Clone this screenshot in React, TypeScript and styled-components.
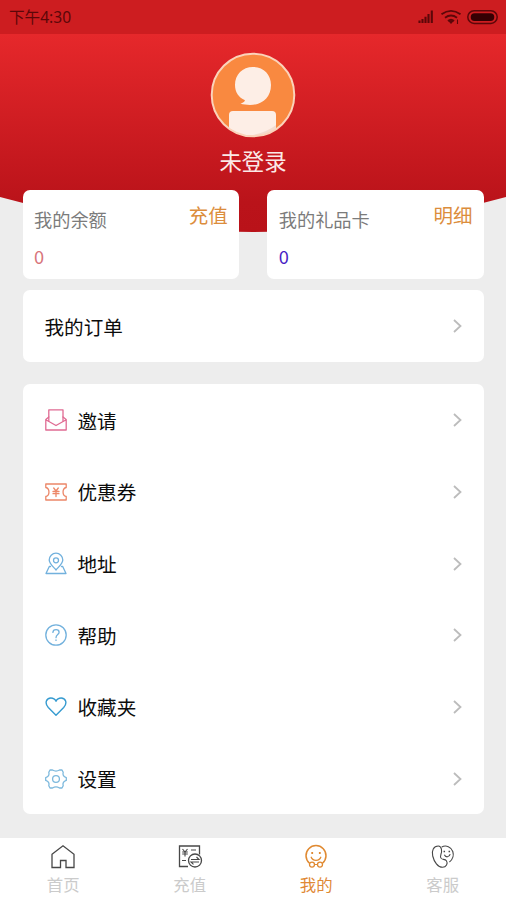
import React from "react";
import styled, { createGlobalStyle } from "styled-components";

const GlobalStyle = createGlobalStyle`
  *, *::before, *::after { box-sizing: border-box; }
  body {
    margin: 0;
    background: #ededed;
    font-family: "Noto Sans CJK SC", "Noto Sans", sans-serif;
  }
`;

const Screen = styled.div`
  width: 506px;
  height: 900px;
  display: flex;
  flex-direction: column;
  background: #ededed;
  overflow: hidden;
`;

const StatusBar = styled.header`
  flex: none;
  height: 34px;
  padding: 0 7px 0 9px;
  display: flex;
  align-items: center;
  justify-content: space-between;
  background: #cd1d20;
  color: #5c0709;
`;

const Clock = styled.span`
  font-family: "Noto Sans", "Noto Sans CJK SC", sans-serif;
  font-size: 15.6px;
  line-height: 34px;
`;

const StatusIcons = styled.svg`
  display: block;
  width: 82px;
  height: 20px;
`;

const Hero = styled.section`
  flex: none;
  height: 198px;
  padding-top: 18px;
  display: flex;
  flex-direction: column;
  align-items: center;
  background: linear-gradient(#e6282b 0%, #ba131a 85%, #b91219 100%);
  clip-path: path("M0 0H506V163Q253 233 0 163Z");
`;

const Avatar = styled.svg`
  display: block;
  width: 86px;
  height: 86px;
`;

const UserName = styled.div`
  margin-top: 7px;
  font-size: 22.4px;
  line-height: 30px;
  color: #fbe9e7;
`;

const Content = styled.main`
  flex: 1;
  margin-top: -42px;
  padding: 0 22px 0 22.5px;
  position: relative;
`;

const Balances = styled.div`
  display: grid;
  grid-template-columns: 1fr 1fr;
  gap: 28px;
`;

const Card = styled.section`
  background: #fff;
  border-radius: 7px;
`;

const BalanceCard = styled(Card)`
  height: 89px;
  padding: 10px 11.5px 0;
`;

const BalanceHead = styled.div`
  display: flex;
  justify-content: space-between;
  align-items: flex-start;
`;

const BalanceLabel = styled.span`
  padding-top: 5px;
  font-size: 18.2px;
  line-height: 28px;
  color: #7b7b7b;
`;

const BalanceAction = styled.span`
  font-size: 19.5px;
  line-height: 29px;
  color: #dc8d3c;
`;

const Amount = styled.div<{ $color: string }>`
  margin-top: 9px;
  font-size: 18.2px;
  line-height: 28px;
  color: ${(p) => p.$color};
`;

const OrderCard = styled(Card)`
  margin-top: 11.4px;
  height: 71.5px;
`;

const MenuCard = styled(Card)`
  margin-top: 22.5px;
  height: 430px;
`;

const Row = styled.div`
  height: 71.67px;
  padding: 0 21.5px 0 22px;
  display: flex;
  align-items: center;
`;

const RowIcon = styled.svg<{ $color: string }>`
  flex: none;
  width: 22px;
  height: 24px;
  margin-right: 11px;
  fill: none;
  stroke: ${(p) => p.$color};
  stroke-width: 1.3;
  stroke-linejoin: round;
  stroke-linecap: round;
`;

const RowLabel = styled.span`
  flex: 1;
  padding-top: 1px;
  font-size: 19.6px;
  line-height: 30px;
  color: #0c0c0c;
`;

const ChevronIcon = styled.svg`
  width: 10px;
  height: 14px;
  fill: none;
  stroke: #bcbcbc;
  stroke-width: 1.8;
`;

const TabBar = styled.nav`
  flex: none;
  height: 62px;
  padding-top: 6px;
  display: grid;
  grid-template-columns: repeat(4, 1fr);
  background: #fff;
`;

const Tab = styled.div`
  display: flex;
  flex-direction: column;
  align-items: center;
`;

const TabIcon = styled.svg<{ $active: boolean }>`
  width: 26px;
  height: 26px;
  fill: none;
  stroke: ${(p) => (p.$active ? "#e08a32" : "#484848")};
  stroke-width: 1.3;
`;

const TabLabel = styled.span<{ $active: boolean }>`
  margin-top: 2px;
  font-size: 16.4px;
  line-height: 24px;
  color: ${(p) => (p.$active ? "#df8935" : "#cbcbcb")};
`;

const Chevron = () => (
  <ChevronIcon viewBox="0 0 10 14">
    <path d="M1 1 7.5 7 1 13" />
  </ChevronIcon>
);

const menu = [
  {
    label: "邀请",
    color: "#e06b93",
    icon: (
      <>
        <path d="M3.8 13V1.8H18V13" />
        <path d="M3.8 9 .8 11.5V22H21.2V11.5L18 9M.8 11.8 11 17.5 21.2 11.8" />
      </>
    ),
  },
  {
    label: "优惠券",
    color: "#ec8768",
    icon: (
      <>
        <path d="M.8 4H21.2V7.5C17 8.3 17 15.7 21.2 16.5V20H.8V16.5C5 15.7 5 8.3.8 7.5Z" />
        <path d="M8.7 8 11 11 13.3 8M8 11.5H14M8 13.7H14M11 11V16.5" />
      </>
    ),
  },
  {
    label: "地址",
    color: "#72b1dd",
    icon: (
      <>
        <path d="M11 18C8 14.5 4.2 11.5 4.2 8a6.8 6.8 0 0 1 13.6 0C17.8 11.5 14 14.5 11 18Z" />
        <circle cx="11" cy="8.3" r="2.5" />
        <path d="M5.5 14.5H4.3L1 21.5H21L17.7 14.5H16.5" />
      </>
    ),
  },
  {
    label: "帮助",
    color: "#72b1dd",
    icon: (
      <>
        <circle cx="11" cy="12" r="10.2" />
        <path d="M7.9 9.4C8 5.7 14.1 5.8 14.1 9.3 14.1 11.6 11 11.7 11 14.7M11 17V17.4" />
      </>
    ),
  },
  {
    label: "收藏夹",
    color: "#369bd0",
    icon: (
      <path
        strokeWidth="1.4"
        d="M11 20.2 3.3 12.4C-.8 8 1.5 3 5.8 3 8.5 3 10.2 4.5 11 6.3 11.8 4.5 13.5 3 16.2 3 20.5 3 22.8 8 18.7 12.4Z"
      />
    ),
  },
  {
    label: "设置",
    color: "#7db9dd",
    icon: (
      <>
        <path d="M5 3H7.5Q11 5.1 14.5 3H17L18.2 5.3C17.4 8 18.6 9.8 21.3 10.6V13.4C18.6 14.2 17.4 16 18.2 18.7L17 21H14.5Q11 18.9 7.5 21H5L3.8 18.7C4.6 16 3.4 14.2.7 13.4V10.6C3.4 9.8 4.6 8 3.8 5.3Z" />
        <circle cx="11" cy="12" r="3.4" />
      </>
    ),
  },
];

const tabs = [
  { label: "首页", active: false, icon: <path d="M2 10.2 13 1.7 24 10.2V23.5H16V16.5H10.5V23.5H2Z" /> },
  {
    label: "充值",
    active: false,
    icon: (
      <>
        <path d="M11 22.5H2.5V2H22.5V10.5" />
        <path strokeWidth="1.1" d="M5.5 5 8 8 10.5 5M5.2 8H10.8M5.2 10H10.8M8 8V12.5M14 6H19M5 16.5H9" />
        <circle cx="18" cy="16.5" r="6.5" />
        <path strokeWidth="1.1" d="M14 15.5H22L19.5 13M22 18H14L16.5 20.3" />
      </>
    ),
  },
  {
    label: "我的",
    active: true,
    icon: (
      <>
        <path strokeWidth="1.5" d="M6.5 19.2A10 10 0 1 1 19.5 19.2" />
        <path strokeWidth="1.2" d="M8 12.8C9.5 17.5 16.5 17.5 18 12.8M11.3 20.5H14.7" />
        <circle cx="9" cy="20.6" r="2.5" />
        <circle cx="17" cy="20.6" r="2.5" />
        <path strokeWidth="1.8" d="M9.2 8V10M16.8 8V10" />
      </>
    ),
  },
  {
    label: "客服",
    active: false,
    icon: (
      <>
        <path
          strokeWidth="1.1"
          d="M8.3 2C3.6 2 1.4 6.5 2.7 12 4 17.7 8 23.3 12.5 23.3 16.2 23.3 18.3 19.5 16.4 16.7 15.2 15 12.4 15.7 11.3 14.5 10.2 13.2 10.4 11.6 11 10 12 7.5 12 2 8.3 2Z"
        />
        <path strokeWidth="1.1" d="M11.7 3C16 .6 21.4 3 22.8 7.5 24 11.5 22.6 15.5 19.4 18M14.4 10.8C15.6 13.8 19.3 13.4 20.2 10.2" />
        <path strokeWidth="1.5" d="M14.3 6.8V8.3M19.3 6.8V8.3" />
      </>
    ),
  },
];

export default function App() {
  return (
    <>
      <GlobalStyle />
      <Screen>
        <StatusBar>
          <Clock>下午4:30</Clock>
          <StatusIcons viewBox="0 0 82 20" fill="none" stroke="#5c0709">
            <path strokeWidth="2.1" d="M2.5 13.5v2.5M5.5 12v4M8.5 9.8V16M11.5 7v9M14.8 3.5V16" />
            <g strokeWidth="1.9">
              <path d="M24.5 7.3Q34 .5 43.5 7.3M28 10.8Q34 6.3 40 10.8" />
              <path d="M31 14Q34 11.5 37 14" />
            </g>
            <path fill="#5c0709" stroke="none" d="M31.5 14.2Q34 12.3 36.5 14.2L34 17Z" />
            <path strokeWidth="1.1" d="M40.5 12.5V17" />
            <rect x="50.8" y="3.8" width="29.4" height="12.6" rx="6.3" strokeWidth="1.5" />
            <rect x="53.7" y="6.2" width="23.6" height="7.8" rx="3.9" fill="#350003" stroke="none" />
          </StatusIcons>
        </StatusBar>

        <Hero>
          <Avatar viewBox="0 0 86 86">
            <defs>
              <clipPath id="avatarClip">
                <circle cx="43" cy="43" r="41" />
              </clipPath>
            </defs>
            <circle cx="43" cy="43" r="41.5" fill="#f98940" />
            <g clipPath="url(#avatarClip)">
              <path
                fill="#fdeee6"
                d="M43 15C53.5 15 61 22.5 61 33 61 45.5 52 53 40 53 36.5 53 33.5 52.5 30.5 51.8 33 51 34.3 50 35 48.3 28.5 45.5 25 40 25 33 25 22.5 32.5 15 43 15Z"
              />
              <path fill="#fdeee6" d="M19 86V63Q19 59 23 59H62Q66 59 66 63V86Z" />
              <path fill="#f3dccf" d="M66 73Q56 81 38 84V86H66Z" />
            </g>
            <circle cx="43" cy="43" r="41.3" fill="none" stroke="#fbd3ba" strokeWidth="2" />
          </Avatar>
          <UserName>未登录</UserName>
        </Hero>

        <Content>
          <Balances>
            <BalanceCard>
              <BalanceHead>
                <BalanceLabel>我的余额</BalanceLabel>
                <BalanceAction>充值</BalanceAction>
              </BalanceHead>
              <Amount $color="#d8757b">0</Amount>
            </BalanceCard>
            <BalanceCard>
              <BalanceHead>
                <BalanceLabel>我的礼品卡</BalanceLabel>
                <BalanceAction>明细</BalanceAction>
              </BalanceHead>
              <Amount $color="#4a1fc4">0</Amount>
            </BalanceCard>
          </Balances>

          <OrderCard>
            <Row>
              <RowLabel>我的订单</RowLabel>
              <Chevron />
            </Row>
          </OrderCard>

          <MenuCard>
            {menu.map((item) => (
              <Row key={item.label}>
                <RowIcon viewBox="0 0 22 24" $color={item.color}>
                  {item.icon}
                </RowIcon>
                <RowLabel>{item.label}</RowLabel>
                <Chevron />
              </Row>
            ))}
          </MenuCard>
        </Content>

        <TabBar>
          {tabs.map((tab) => (
            <Tab key={tab.label}>
              <TabIcon viewBox="0 0 26 26" $active={tab.active}>
                {tab.icon}
              </TabIcon>
              <TabLabel $active={tab.active}>{tab.label}</TabLabel>
            </Tab>
          ))}
        </TabBar>
      </Screen>
    </>
  );
}
